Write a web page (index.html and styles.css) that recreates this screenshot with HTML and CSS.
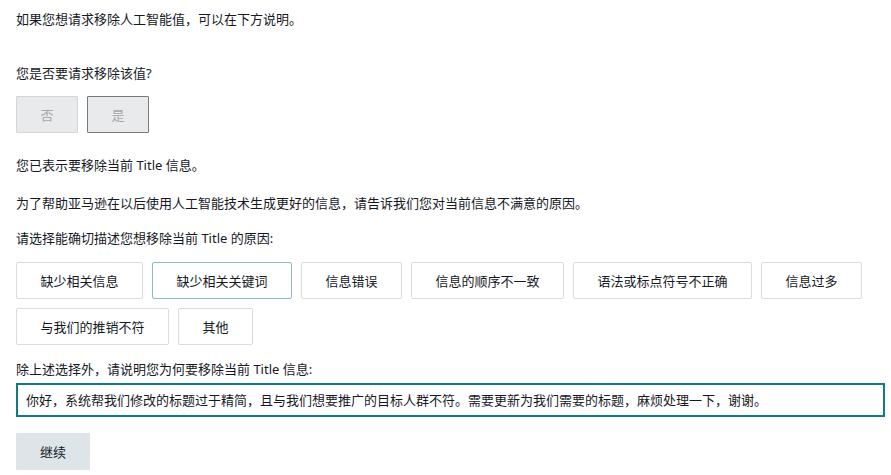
FILE: index.html
```html
<!DOCTYPE html>
<html lang="zh-CN">
<head>
<meta charset="utf-8">
<title>移除人工智能值</title>
<link rel="stylesheet" href="styles.css">
</head>
<body>
<div class="page">
  <p class="intro">如果您想请求移除人工智能值，可以在下方说明。</p>
  <p class="question">您是否要请求移除该值?</p>
  <div class="yesno">
    <button class="yn">否</button>
    <button class="yn yn-selected">是</button>
  </div>
  <p class="note">您已表示要移除当前 Title 信息。</p>
  <p class="help">为了帮助亚马逊在以后使用人工智能技术生成更好的信息，请告诉我们您对当前信息不满意的原因。</p>
  <p class="choose">请选择能确切描述您想移除当前 Title 的原因:</p>
  <div class="reasons">
    <button class="reason">缺少相关信息</button>
    <button class="reason reason-selected">缺少相关关键词</button>
    <button class="reason">信息错误</button>
    <button class="reason">信息的顺序不一致</button>
    <button class="reason">语法或标点符号不正确</button>
    <button class="reason">信息过多</button>
    <button class="reason">与我们的推销不符</button>
    <button class="reason">其他</button>
  </div>
  <p class="label">除上述选择外，请说明您为何要移除当前 Title 信息:</p>
  <div class="field">你好，系统帮我们修改的标题过于精简，且与我们想要推广的目标人群不符。需要更新为我们需要的标题，麻烦处理一下，谢谢。</div>
  <button class="continue">继续</button>
</div>
</body>
</html>
```

FILE: styles.css
```css
html, body {
  margin: 0;
  padding: 0;
  background: #ffffff;
}

body {
  font-family: "Noto Sans", "Noto Sans CJK SC", sans-serif;
  font-size: 13px;
  color: #16191f;
}

.page {
  padding: 9px 6px 0 16px;
  display: flex;
  flex-direction: column;
  align-items: flex-start;
}

p {
  margin: 0;
  line-height: 20px;
}

.question {
  margin-top: 34px;
}

.yesno {
  display: flex;
  gap: 9px;
  margin-top: 13px;
}

button {
  font-family: "Noto Sans", "Noto Sans CJK SC", sans-serif;
  font-size: 13px;
  margin: 0;
  cursor: pointer;
}

.yn {
  width: 62px;
  height: 37px;
  background: #e8eaeb;
  border: 1px solid #d2d6d7;
  color: #a3a8ab;
  border-radius: 1px;
  padding: 0;
}

.yn-selected {
  border-color: #767a7c;
}

.note {
  margin-top: 22px;
}

.help {
  margin-top: 18px;
}

.choose {
  margin-top: 15px;
}

.reasons {
  display: flex;
  flex-wrap: wrap;
  gap: 9px;
  margin-top: 14px;
  width: 860px;
}

.reason {
  height: 37px;
  padding: 0 23.5px;
  background: #ffffff;
  border: 1px solid #d9dcdd;
  border-radius: 2px;
  color: #16191f;
}

.reason-selected {
  border-color: #8dbcbf;
}

.label {
  margin-top: 14px;
}

.field {
  align-self: stretch;
  margin-top: 4px;
  height: 30px;
  line-height: 30px;
  border: 2px solid #117a83;
  padding: 0 8px;
  color: #16191f;
  white-space: nowrap;
  overflow: hidden;
}

.continue {
  margin-top: 16px;
  height: 37px;
  padding: 0 24px;
  background: #dde5e8;
  border: none;
  border-radius: 1px;
  color: #16191f;
}
```
